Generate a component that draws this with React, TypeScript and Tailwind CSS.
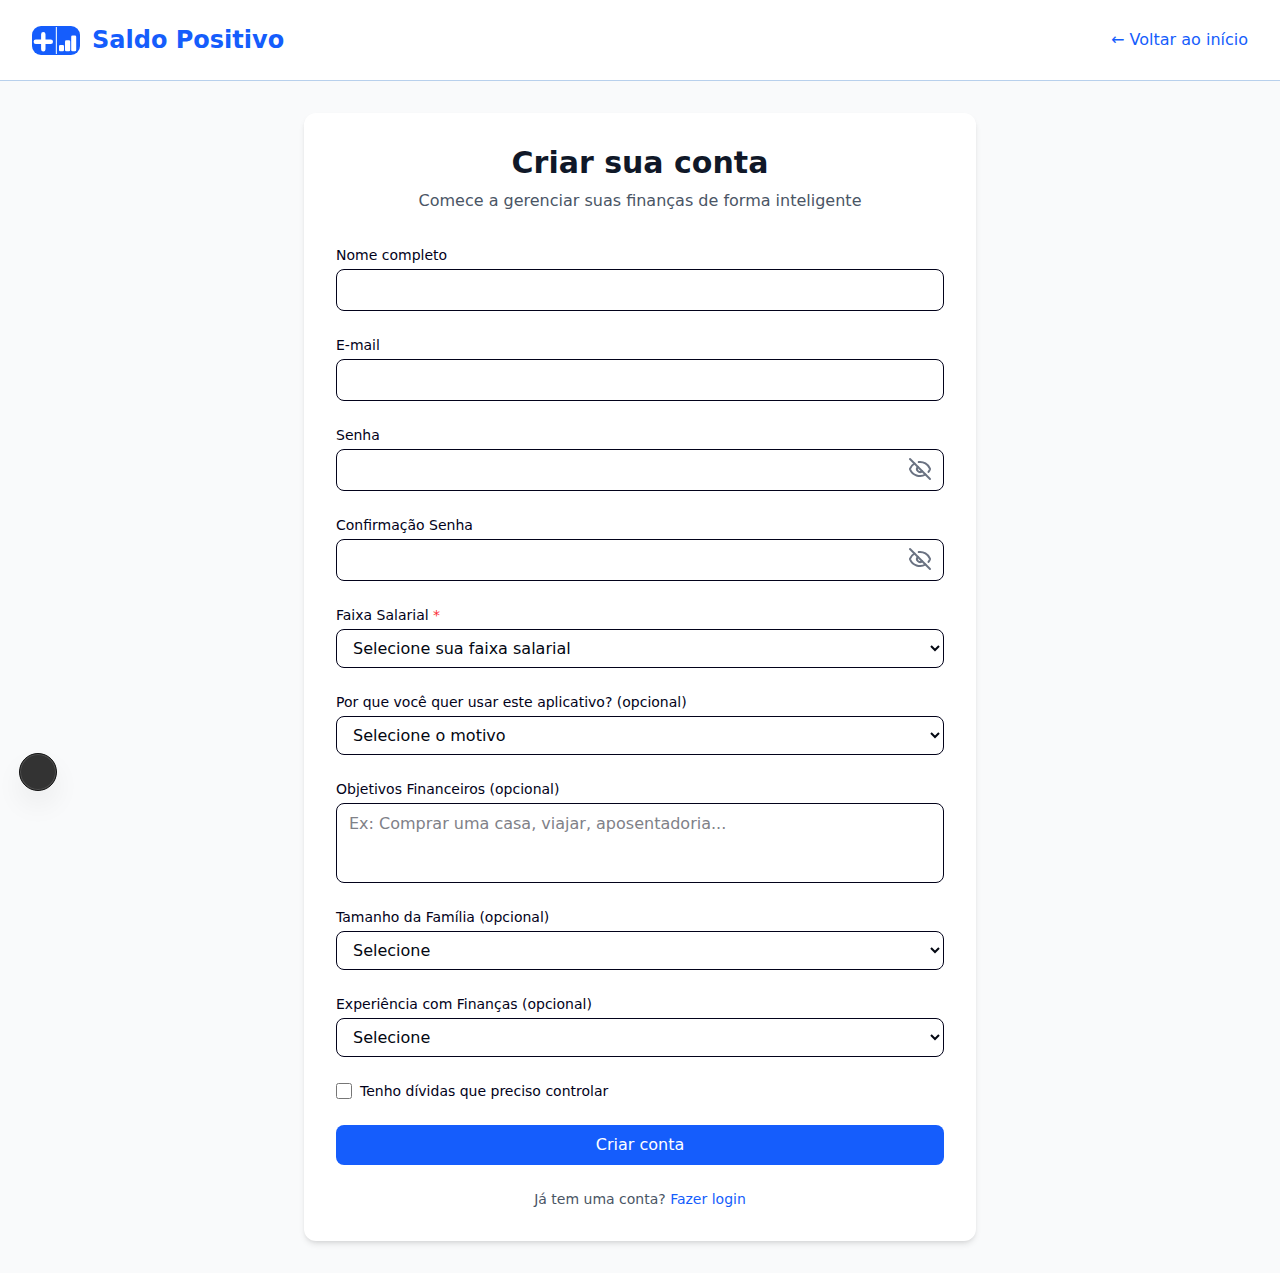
import type { ReactNode } from "react";
import { EyeOff } from "lucide-react";

const fieldClass =
  "block w-full rounded-lg border border-[#02021a] bg-white text-base text-[#030712]";

function Field({ label, required, children }: { label: string; required?: boolean; children: ReactNode }) {
  return (
    <div>
      <label className="mb-1 block text-sm text-[#02021a]">
        {label}
        {required && <span className="text-red-500"> *</span>}
      </label>
      {children}
    </div>
  );
}

function PasswordInput() {
  return (
    <div className="relative">
      <input type="password" className={`${fieldClass} h-[42px] px-3 py-2 pr-10`} />
      <button type="button" aria-label="Mostrar senha" className="absolute inset-y-0 right-3 flex items-center pb-0.5 text-gray-500">
        <EyeOff size={24} />
      </button>
    </div>
  );
}

function Select({ placeholder }: { placeholder: string }) {
  return (
    <select className={`${fieldClass} h-[39px] px-3 py-2`}>
      <option>{placeholder}</option>
    </select>
  );
}

function Logo() {
  return (
    <svg width="48" height="30" viewBox="0 0 48 30" fill="none">
      <rect y="1" width="48" height="29" rx="9" fill="#155dfc" />
      <path d="M11.3 9.2v15M3.8 16.7h15" stroke="white" strokeWidth="4.4" strokeLinecap="round" />
      <path d="M24.4 2v27" stroke="#dbeafe" strokeWidth="1.2" />
      <rect x="27" y="20" width="5" height="6.3" rx="1.3" fill="white" />
      <rect x="33" y="15.2" width="5.2" height="11.1" rx="1.3" fill="white" />
      <rect x="39.2" y="10.4" width="5" height="15.9" rx="1.3" fill="white" />
    </svg>
  );
}

export default function App() {
  return (
    <div className="min-h-screen bg-gray-50 font-['DejaVu_Sans',sans-serif] text-[#030712]">
      <header className="flex h-[81px] items-center justify-between border-b border-[#b8d0ec] bg-white px-8">
        <div className="flex items-center gap-3 text-2xl font-bold text-[#155dfc]">
          <Logo />
          <span>Saldo Positivo</span>
        </div>
        <a href="#" className="text-[#155dfc]">← Voltar ao início</a>
      </header>
      <main className="py-8">
        <div className="mx-auto w-full max-w-2xl rounded-xl bg-white p-8 shadow-md">
          <div className="mb-8 text-center">
            <h1 className="mb-2 text-3xl font-bold text-gray-900">Criar sua conta</h1>
            <p className="text-gray-600">Comece a gerenciar suas finanças de forma inteligente</p>
          </div>
          <form className="space-y-6">
            <Field label="Nome completo">
              <input type="text" className={`${fieldClass} h-[42px] px-3 py-2`} />
            </Field>
            <Field label="E-mail">
              <input type="email" className={`${fieldClass} h-[42px] px-3 py-2`} />
            </Field>
            <Field label="Senha">
              <PasswordInput />
            </Field>
            <Field label="Confirmação Senha">
              <PasswordInput />
            </Field>
            <Field label="Faixa Salarial" required>
              <Select placeholder="Selecione sua faixa salarial" />
            </Field>
            <Field label="Por que você quer usar este aplicativo? (opcional)">
              <Select placeholder="Selecione o motivo" />
            </Field>
            <Field label="Objetivos Financeiros (opcional)">
              <textarea
                placeholder="Ex: Comprar uma casa, viajar, aposentadoria..."
                className={`${fieldClass} h-20 resize-none px-3 py-2 placeholder:text-[#808188]`}
              />
            </Field>
            <Field label="Tamanho da Família (opcional)">
              <Select placeholder="Selecione" />
            </Field>
            <Field label="Experiência com Finanças (opcional)">
              <Select placeholder="Selecione" />
            </Field>
            <label className="flex items-center gap-2 text-sm text-[#02021a]">
              <input type="checkbox" className="size-4" />
              Tenho dívidas que preciso controlar
            </label>
            <button type="button" className="block h-10 w-full rounded-lg bg-[#155dfc] text-white">
              Criar conta
            </button>
          </form>
          <p className="mt-6 text-center text-sm text-gray-600">
            Já tem uma conta? <a href="#" className="text-[#155dfc]">Fazer login</a>
          </p>
        </div>
      </main>
      <div className="fixed left-[19px] top-[753px] size-[38px] rounded-full border border-[#111] bg-[#333] shadow-[inset_0_0_0_1px_#505050,0_14px_28px_rgba(0,0,0,0.06)]" />
    </div>
  );
}
